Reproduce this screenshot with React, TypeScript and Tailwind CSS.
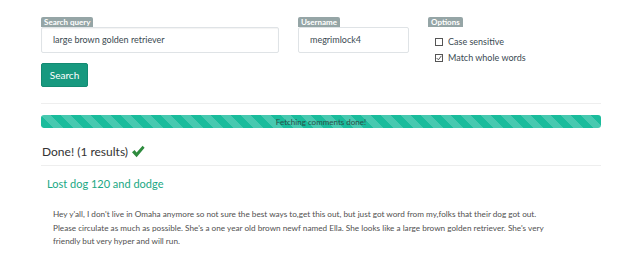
import React from 'react';

const Tag: React.FC<{ children: React.ReactNode }> = ({ children }) => (
  <div className="w-fit bg-[#95a5a6] text-white text-[8px] font-bold leading-[10px] px-[3px] rounded-t-[2px]">
    {children}
  </div>
);

const Check = () => (
  <svg width="14" height="13" viewBox="0 0 14 13" className="inline-block ml-[3px] -mt-[3px]">
    <path d="M1 7.2 L3.6 5 L5.6 7.4 L11.6 0.8 L13.6 2.8 L5.6 12.2 Z" fill="#2e8b3e" />
  </svg>
);

export default function App() {
  return (
    <div className="w-[640px] h-[266px] bg-white font-['Lato','Liberation_Sans',sans-serif] text-[#2c3e50] overflow-hidden">
      <div className="mx-[41px] pt-[17px]">
        <div className="flex">
          <div className="w-[238px]">
            <Tag>Search query</Tag>
            <div className="h-[26px] border border-[#dfe3e6] rounded-[2px] shadow-[inset_0_1px_1px_rgba(0,0,0,0.05)] flex items-center pl-[11px] text-[9px] text-[#3b4a52]">
              large brown golden retriever
            </div>
            <button className="mt-[10px] h-[24px] w-[47px] bg-[#17997f] text-white text-[10px] rounded-[2px] border border-[#138a72]">
              Search
            </button>
          </div>
          <div className="ml-[19px] w-[111px]">
            <Tag>Username</Tag>
            <div className="h-[26px] border border-[#dfe3e6] rounded-[2px] flex items-center pl-[11px] text-[9px] text-[#3b4a52]">
              megrimlock4
            </div>
          </div>
          <div className="ml-[19px]">
            <Tag>Options</Tag>
            <div className="mt-[9px] ml-[7px] flex flex-col gap-[4px] text-[9px] text-[#3b4a52]">
              <label className="flex items-center gap-[5px] leading-[12px]">
                <span className="w-[8px] h-[8px] border border-[#555] inline-block" />
                Case sensitive
              </label>
              <label className="flex items-center gap-[5px] leading-[12px]">
                <span className="w-[8px] h-[8px] border border-[#555] inline-flex items-center justify-center">
                  <svg width="6" height="6" viewBox="0 0 6 6">
                    <path d="M0.6 3 L2.4 4.8 L5.4 0.8" stroke="#444" strokeWidth="0.9" fill="none" />
                  </svg>
                </span>
                Match whole words
              </label>
            </div>
          </div>
        </div>

        <div className="mt-[16px] border-t border-[#eeeeee] w-[560px]" />

        <div className="mt-[11px] w-[560px] h-[13px] rounded-[3px] bg-[#1abc9c] flex items-center justify-center text-[8px] text-[#2c4f48] leading-none bg-[linear-gradient(45deg,rgba(255,255,255,0.2)_25%,transparent_25%,transparent_50%,rgba(255,255,255,0.2)_50%,rgba(255,255,255,0.2)_75%,transparent_75%,transparent)] bg-[length:20px_20px]">
          Fetching comments done!
        </div>

        <div className="mt-[16px] text-[12px] text-[#333] leading-[16px] pl-[1px]">
          Done! (1 results)
          <Check />
        </div>

        <div className="mt-[5px] border-t border-[#eeeeee] w-[560px]" />

        <div className="mt-[10px] pl-[6px] text-[11px] text-[#1aa884] leading-[16px]">
          Lost dog 120 and dodge
        </div>

        <p className="mt-[16px] ml-[12px] w-[495px] text-[8.2px] leading-[13.5px] text-[#505050]">
          Hey y'all, I don't live in Omaha anymore so not sure the best ways to,get this out, but just got word from my,folks that their dog got out. Please circulate as much as possible. She's a one year old brown newf named Ella. She looks like a large brown golden retriever. She's very friendly but very hyper and will run.
        </p>
      </div>
    </div>
  );
}
